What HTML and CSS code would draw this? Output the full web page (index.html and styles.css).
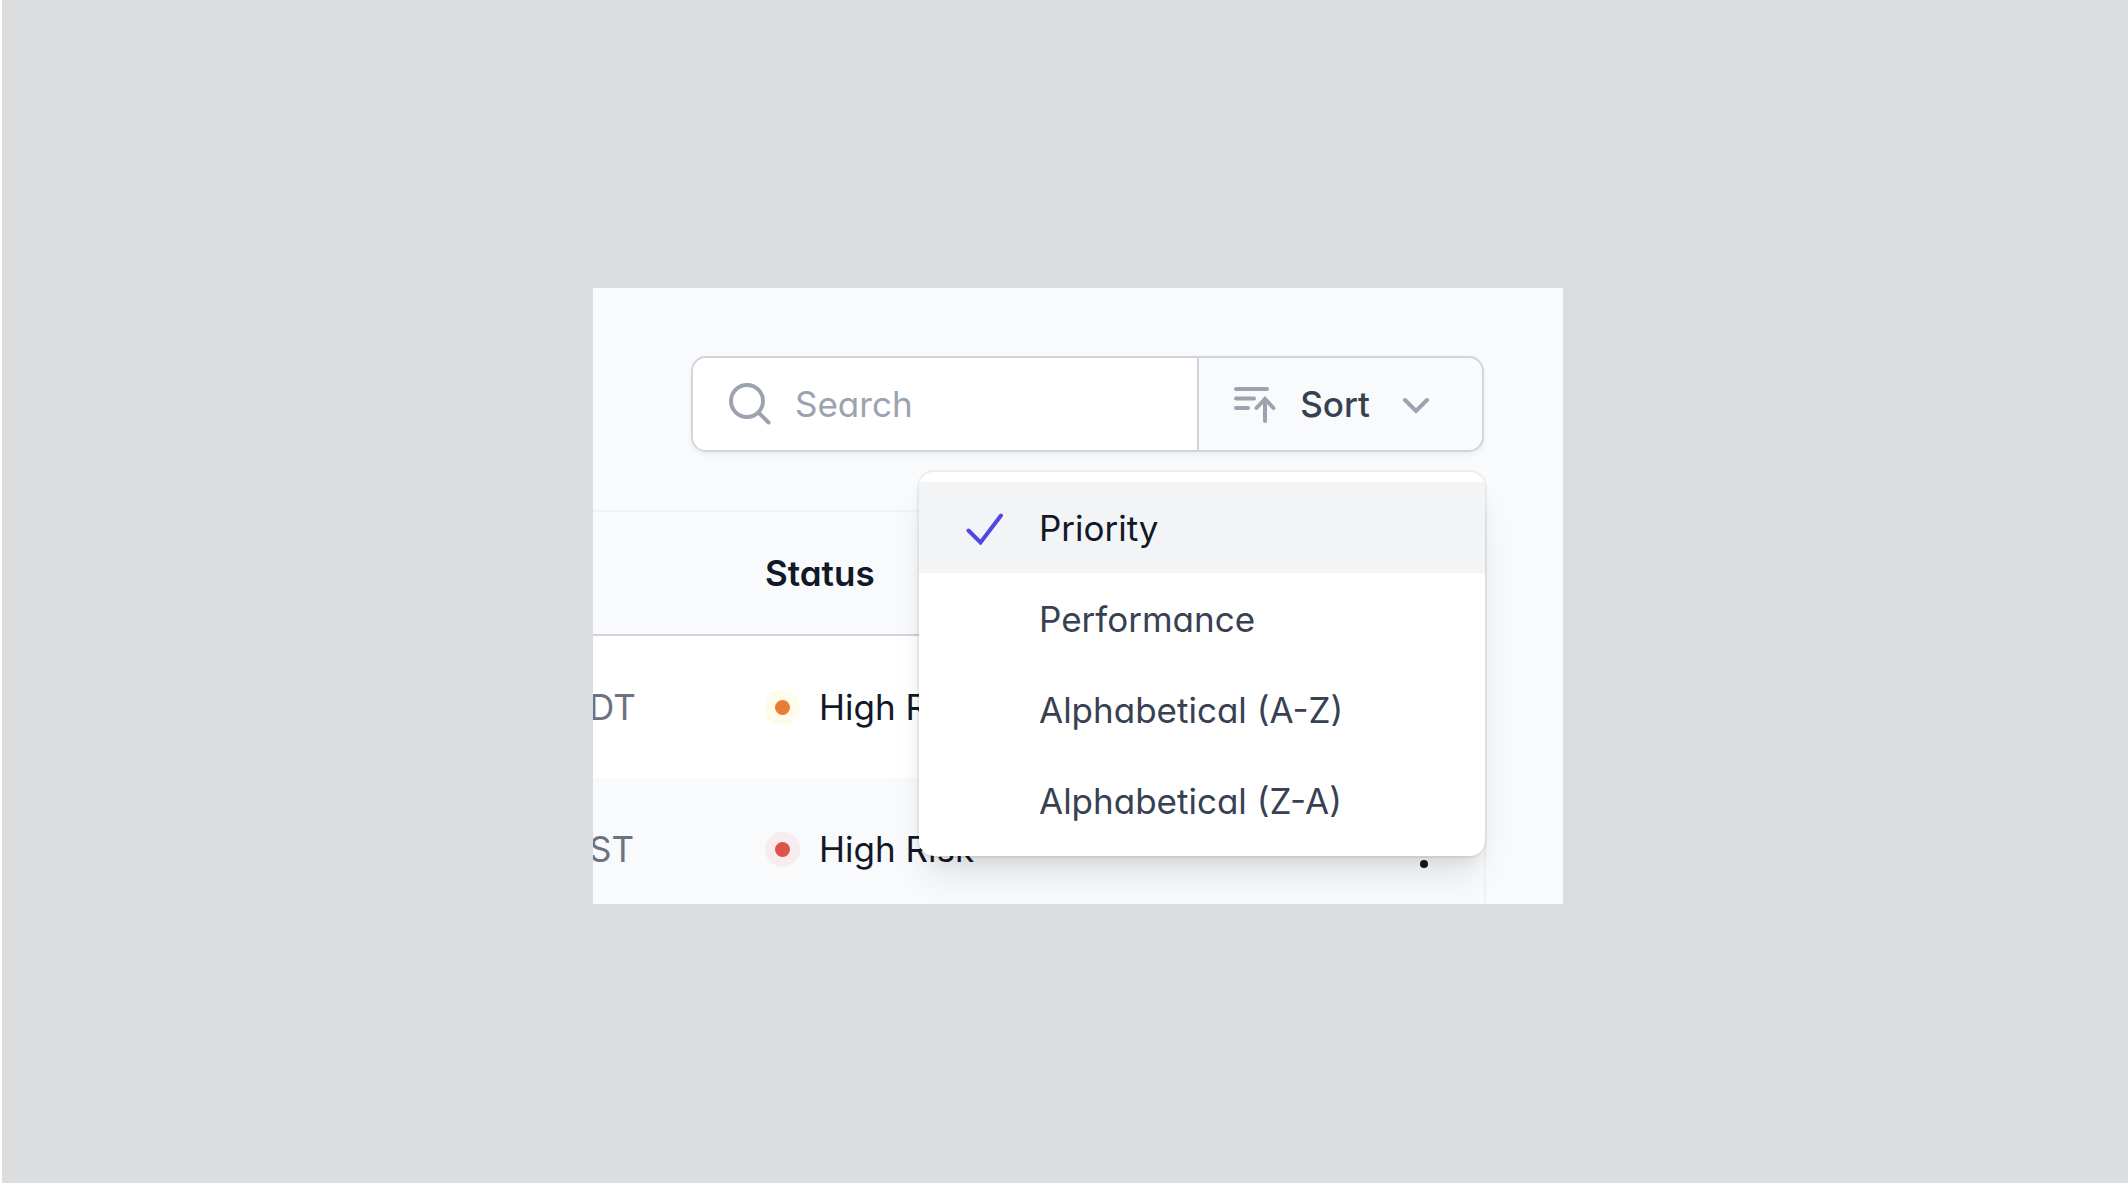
FILE: index.html
```
<!DOCTYPE html>
<html lang="en">
<head>
    <meta charset="UTF-8">
    <meta name="viewport" content="width=device-width, initial-scale=1.0">
    <title>Sort menu</title>
    <link rel="stylesheet" href="styles.css">
</head>
<body>
<main class="panel">
    <div class="toolbar">
        <div class="control">
            <label class="search">
                <svg class="search-icon" viewBox="0 0 42 42" aria-hidden="true">
                    <circle cx="17" cy="18" r="16"/>
                    <path d="M28.500 29.500L38.500 39.500"/>
                </svg>
                <input type="text" placeholder="Search" aria-label="Search">
            </label>
            <button class="sort" type="button" aria-haspopup="true" aria-expanded="true">
                <svg class="sort-icon" viewBox="0 0 42 38" aria-hidden="true">
                    <path d="M2 3H33M2 12.500H20M2 22H14M31 35V13M22.500 22L31 13L39.500 22"/>
                </svg>
                Sort
                <svg class="chevron" viewBox="0 0 26 20" aria-hidden="true">
                    <path d="M2 5L13 16L24 5"/>
                </svg>
            </button>
        </div>
        <div class="menu" role="menu">
            <button class="item active" type="button" role="menuitem">
                <svg class="check" viewBox="0 0 37 32" aria-hidden="true">
                    <path d="M2.500 17.500L14.500 29.500L35 2.500"/>
                </svg>
                Priority
            </button>
            <button class="item" type="button" role="menuitem">Performance</button>
            <button class="item" type="button" role="menuitem">Alphabetical (A-Z)</button>
            <button class="item" type="button" role="menuitem">Alphabetical (Z-A)</button>
        </div>
    </div>
    <div class="table-wrap">
        <table>
            <thead>
                <tr>
                    <th class="time"></th>
                    <th>Status</th>
                    <th class="actions"></th>
                </tr>
            </thead>
            <tbody>
                <tr>
                    <td class="time">DT</td>
                    <td><span class="status"><span class="dot orange"></span>High Risk</span></td>
                    <td class="actions">
                        <button class="more" type="button" aria-label="More">
                            <svg viewBox="0 0 8 36" aria-hidden="true"><circle cx="4" cy="4" r="4"/><circle cx="4" cy="18" r="4"/><circle cx="4" cy="32" r="4"/></svg>
                        </button>
                    </td>
                </tr>
                <tr>
                    <td class="time">ST</td>
                    <td><span class="status"><span class="dot red"></span>High Risk</span></td>
                    <td class="actions">
                        <button class="more" type="button" aria-label="More">
                            <svg viewBox="0 0 8 36" aria-hidden="true"><circle cx="4" cy="4" r="4"/><circle cx="4" cy="18" r="4"/><circle cx="4" cy="32" r="4"/></svg>
                        </button>
                    </td>
                </tr>
            </tbody>
        </table>
    </div>
</main>
</body>
</html>
```
FILE: styles.css
```
* {
    box-sizing: border-box;
}
body {
    display: grid;
    grid-template-columns: 591fr 970fr 565fr;
    grid-template-rows: 288fr 616fr 279fr;
    height: 100vh;
    margin: 0;
    border-left: 2px solid #fff;
    background-color: #dcddde;
    color: #111827;
    font-family: Inter, sans-serif;
    font-size: 35px;
    line-height: 51px;
    font-feature-settings: "cv11";
}
button, input {
    margin: 0;
    border: 0;
    background: none;
    font: inherit;
    font-feature-settings: inherit;
    color: inherit;
}
svg {
    flex: none;
    fill: none;
    stroke: #9ca3af;
    stroke-width: 4;
    stroke-linecap: round;
}
.panel {
    grid-column: 2;
    grid-row: 2;
    min-width: 0;
    overflow: hidden;
    background-color: #f9fafc;
}

.toolbar {
    position: relative;
    margin: 68px 79px 60px 98px;
}
.control {
    display: flex;
    border: 2px solid #d1d5db;
    border-radius: 15px;
    box-shadow: 0 3px 5px rgba(0, 0, 0, 0.05);
}
.search {
    display: flex;
    flex: 1;
    align-items: center;
    gap: 23px;
    min-width: 0;
    padding-left: 37px;
    background-color: #fff;
    border-radius: 13px 0 0 13px;
}
.search input {
    flex: 1;
    min-width: 0;
    padding: 0;
    outline: none;
}
.search input::placeholder {
    color: #9ca3af;
    opacity: 1;
}
.search-icon {
    width: 42px;
    height: 42px;
    overflow: visible;
    stroke-width: 4;
}
.sort {
    display: flex;
    align-items: center;
    padding: 21px 53px 20px 35px;
    border-left: 2px solid #d1d5db;
    color: #374151;
    font-weight: 500;
}
.sort-icon {
    width: 42px;
    height: 38px;
    margin-right: 24px;
}
.chevron {
    width: 26px;
    height: 20px;
    margin-left: 33px;
}

.menu {
    position: absolute;
    top: 116px;
    right: -1px;
    width: 566px;
    padding: 10px 0;
    background-color: #fff;
    border-radius: 15px;
    box-shadow: 0 0 0 2px rgba(0, 0, 0, 0.05), 0 26px 38px -8px rgba(0, 0, 0, 0.1), 0 10px 15px -5px rgba(0, 0, 0, 0.08);
}
.item {
    display: flex;
    align-items: center;
    width: 100%;
    padding: 21px 36px 19px 120px;
    color: #374151;
}
.item.active {
    padding-left: 47px;
    background-color: #f3f4f6;
    color: #111827;
}
.check {
    width: 37px;
    height: 32px;
    margin-right: 36px;
    stroke: #4f46e5;
}

.table-wrap {
    margin-right: 79px;
    background-color: #fff;
    box-shadow: 0 0 0 2px rgba(0, 0, 0, 0.03);
}
table {
    width: 100%;
    border-collapse: separate;
    border-spacing: 0;
    table-layout: fixed;
}
th, td {
    padding: 46px 0 45px;
    text-align: left;
    font-weight: 400;
}
th {
    padding: 36px 0 35px;
    background-color: #f9fafc;
    border-bottom: 2px solid #d1d5db;
    font-weight: 600;
}
tbody tr:nth-child(even) {
    background-color: #f9fafc;
}
.time {
    width: 172px;
    color: #6b7280;
    text-indent: -4px;
}
.actions {
    width: 64px;
}
.status {
    display: flex;
    align-items: center;
    gap: 19px;
}
.dot {
    display: flex;
    width: 35px;
    height: 35px;
    border: 10px solid #fffbeb;
    border-radius: 50%;
}
.orange {
    background-color: #e87b35;
}
.red {
    background-color: #dd524c;
    border-color: #f7ecee;
}
.more {
    display: flex;
    padding: 0;
}
.more svg {
    width: 8px;
    height: 36px;
    fill: #111827;
    stroke: none;
}
```
